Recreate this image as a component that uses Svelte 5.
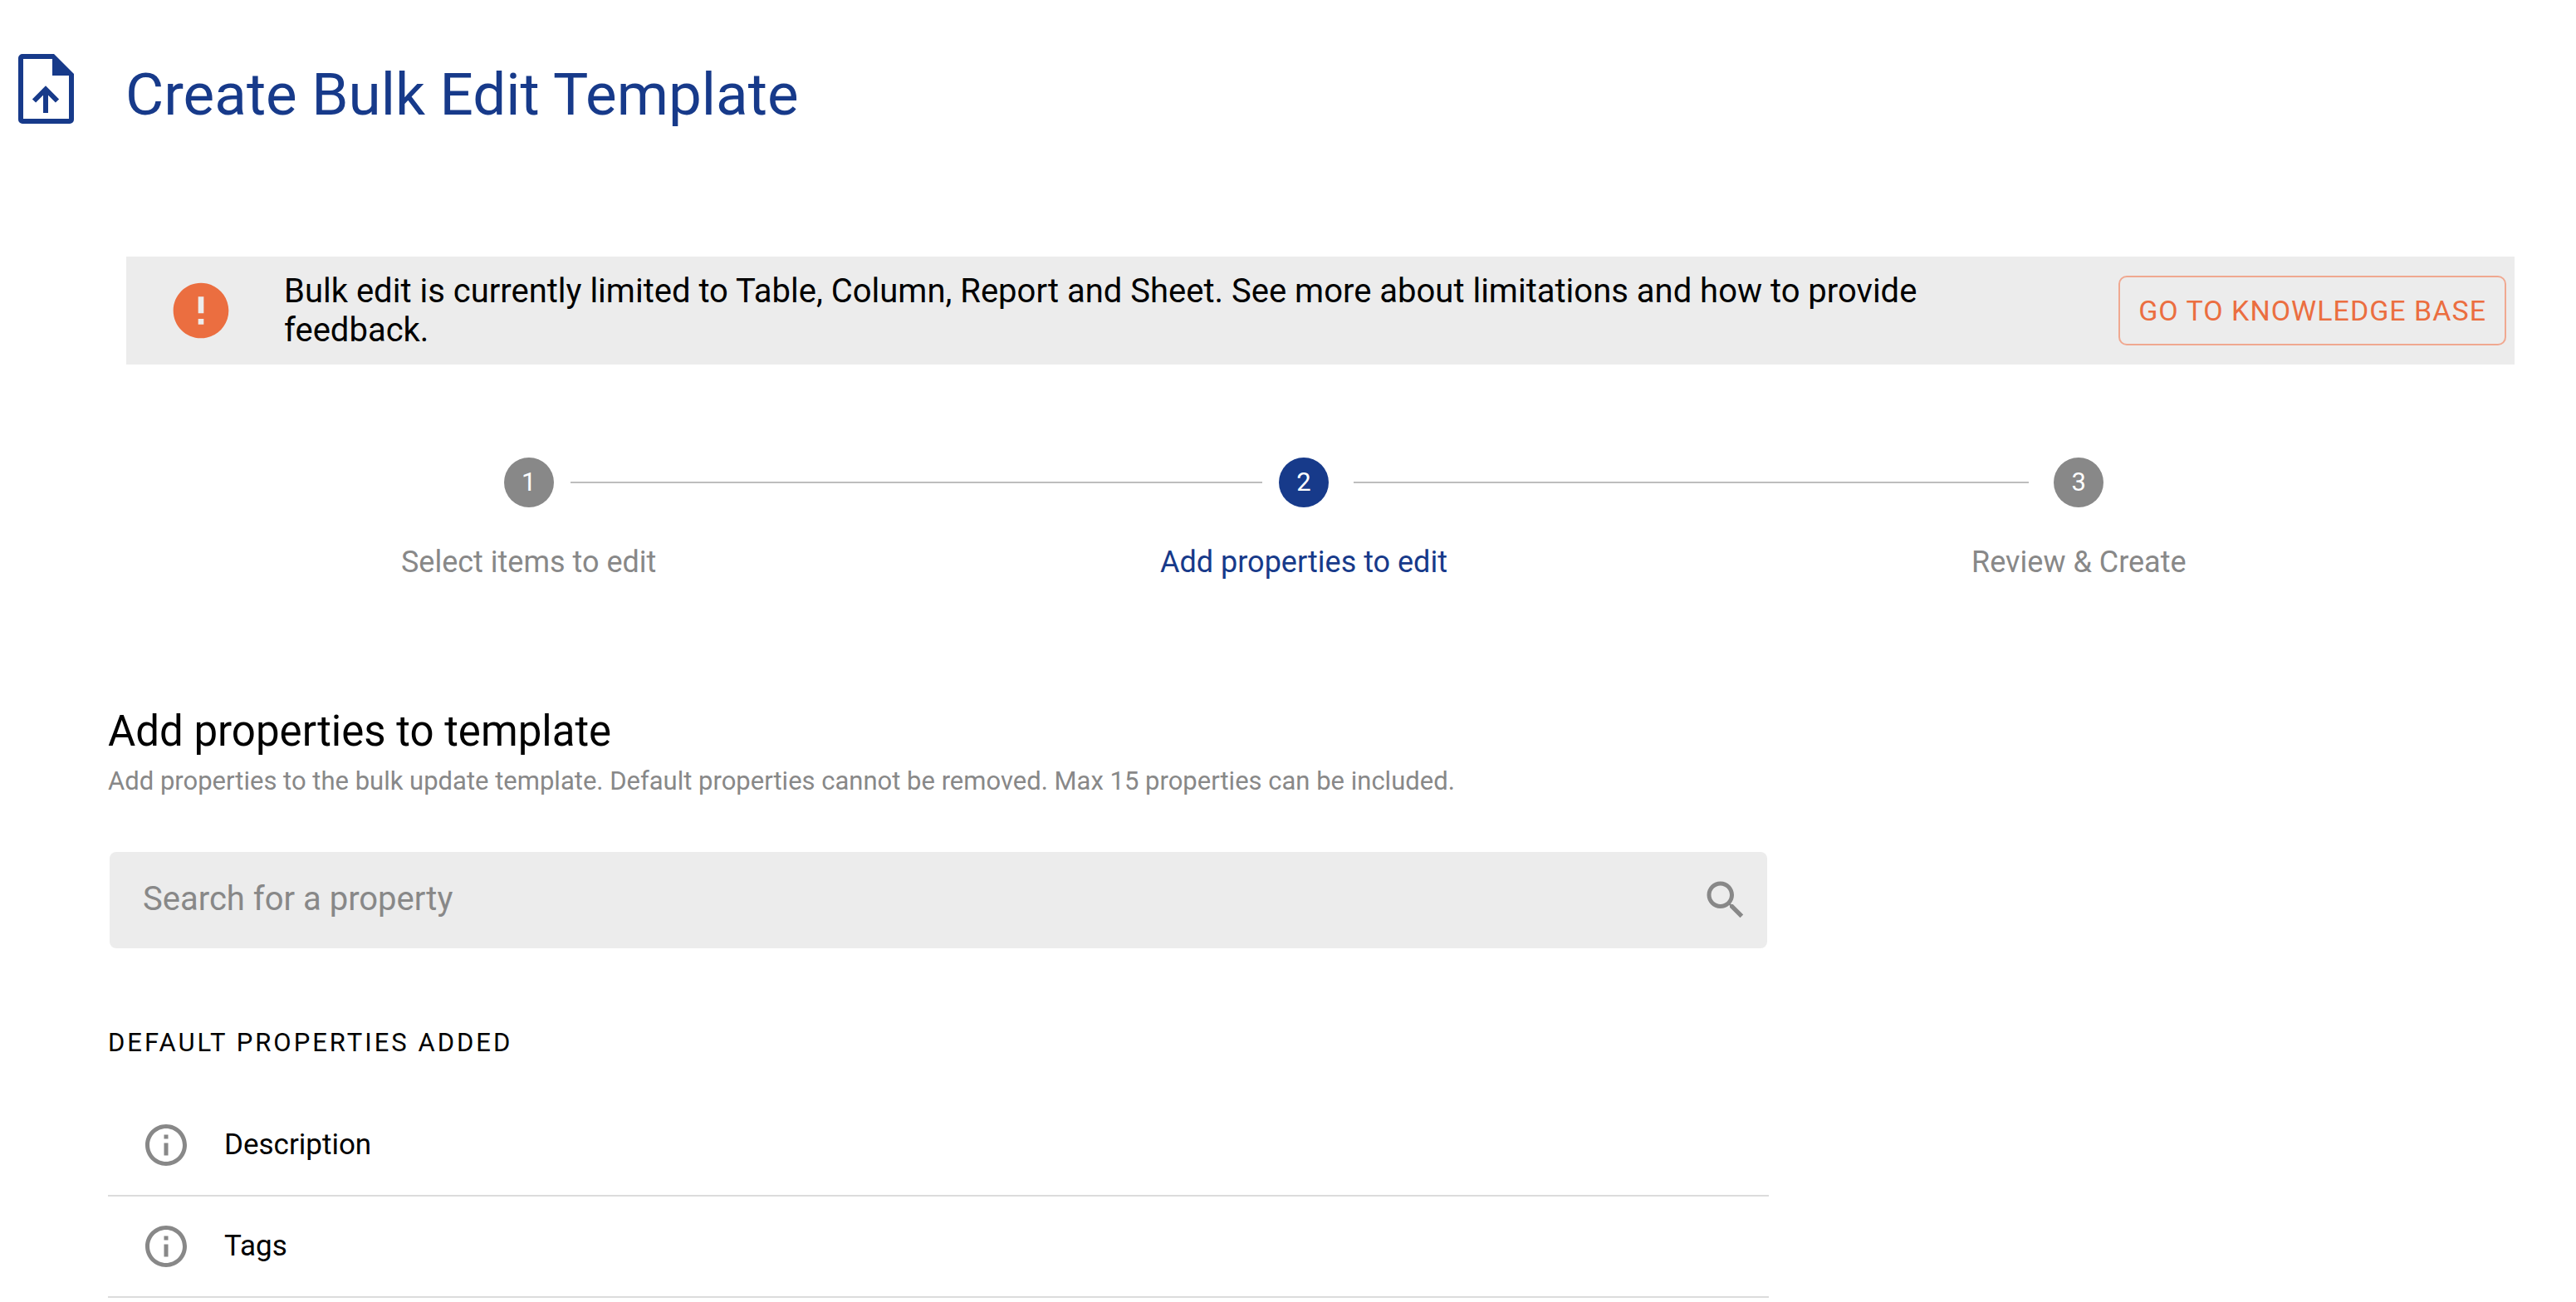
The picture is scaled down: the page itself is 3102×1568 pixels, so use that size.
<script>
  let query = $state('');
  const steps = ['Select items to edit', 'Add properties to edit', 'Review & Create'];
  const current = 1;
  const defaults = ['Description', 'Tags'];
</script>

<main>
  <header class="page-head">
    <svg class="file-icon" viewBox="0 0 100 100" aria-hidden="true">
      <path fill="currentColor" fill-rule="evenodd" d="M22 8h38l24 24v55a5 5 0 0 1-5 5H22a5 5 0 0 1-5-5V13a5 5 0 0 1 5-5zM23 14v72h55V34H58V14z" />
      <path fill="none" stroke="currentColor" stroke-width="6" d="M50 79V52M36 64.500l14-14 14 14" />
    </svg>
    <h1>Create Bulk Edit Template</h1>
  </header>

  <section class="banner">
    <svg class="alert-icon" viewBox="0 0 24 24" aria-hidden="true">
      <path fill="currentColor" d="M12 2C6.48 2 2 6.48 2 12s4.48 10 10 10 10-4.48 10-10S17.52 2 12 2zm1 15h-2v-2h2v2zm0-4h-2V7h2v6z" />
    </svg>
    <p>Bulk edit is currently limited to Table, Column, Report and Sheet. See more about limitations and how to provide feedback.</p>
    <button type="button">GO TO KNOWLEDGE BASE</button>
  </section>

  <ol class="steps">
    {#each steps as label, i}
      <li class:active={i === current} aria-current={i === current ? 'step' : undefined}>
        <div class="track">
          <span class="line"></span>
          <span class="dot">{i + 1}</span>
          <span class="line"></span>
        </div>
        <span class="label">{label}</span>
      </li>
    {/each}
  </ol>

  <section class="props">
    <h2>Add properties to template</h2>
    <p class="hint">Add properties to the bulk update template. Default properties cannot be removed. Max 15 properties can be included.</p>

    <label class="search">
      <input type="text" placeholder="Search for a property" aria-label="Search for a property" bind:value={query} />
      <svg viewBox="0 0 24 24" aria-hidden="true">
        <path fill="currentColor" d="M15.5 14h-.79l-.28-.27C15.41 12.59 16 11.11 16 9.5 16 5.91 13.09 3 9.5 3S3 5.910 3 9.5 5.910 16 9.5 16c1.61 0 3.09-.59 4.23-1.57l.27.28v.79l5 4.99L20.49 19l-4.99-5zm-6 0C7.01 14 5 11.99 5 9.5S7.010 5 9.5 5 14 7.010 14 9.5 11.99 14 9.5 14z" />
      </svg>
    </label>

    <h3>DEFAULT PROPERTIES ADDED</h3>
    <ul>
      {#each defaults as name}
        <li>
          <svg viewBox="0 0 24 24" aria-hidden="true">
            <path fill="currentColor" d="M11 7h2v2h-2zm0 4h2v6h-2zm1-9C6.48 2 2 6.48 2 12s4.48 10 10 10 10-4.48 10-10S17.52 2 12 2zm0 18c-4.41 0-8-3.59-8-8s3.59-8 8-8 8 3.59 8 8-3.59 8-8 8z" />
          </svg>
          <span>{name}</span>
        </li>
      {/each}
    </ul>
  </section>
</main>

<style>
  :global(body) {
    background: #fff;
  }
  main {
    font-family: Roboto, "Liberation Sans", sans-serif;
    color: #000;
    padding-top: 57px;
  }
  h1, h2, h3, p, ul, ol {
    margin: 0;
    padding: 0;
    font-weight: 400;
  }
  ul, ol {
    list-style: none;
  }
  svg {
    display: block;
    flex: none;
  }
  .page-head {
    display: flex;
    align-items: center;
    gap: 46px;
    padding-left: 5px;
    color: #173a8a;
  }
  .file-icon {
    width: 100px;
    height: 100px;
  }
  h1 {
    font-size: 71px;
    line-height: 84px;
    padding-top: 14px;
  }
  .banner {
    display: flex;
    align-items: center;
    min-height: 130px;
    margin: 152px 74px 0 152px;
    padding: 0 10px 0 50px;
    box-sizing: border-box;
    background: #ececec;
  }
  .alert-icon {
    width: 80px;
    height: 80px;
    color: #eb6e40;
  }
  .banner p {
    flex: 1;
    margin: 0 120px 0 60px;
    font-size: 40px;
    line-height: 47px;
  }
  button {
    flex: none;
    height: 84px;
    padding: 0 22px;
    border: 2px solid #f0a890;
    border-radius: 10px;
    background: none;
    color: #eb6e40;
    font: inherit;
    font-size: 34px;
    letter-spacing: 1px;
  }
  .steps {
    display: grid;
    grid-template-columns: repeat(3, 1fr);
    margin: 112px 132px 0 170px;
  }
  .steps li {
    color: #888;
    text-align: center;
  }
  .steps li.active {
    color: #173a8a;
  }
  .track {
    display: grid;
    grid-template-columns: 1fr 60px 1fr;
    align-items: center;
    gap: 20px;
    margin-bottom: 45px;
  }
  .line {
    height: 2px;
    background: #bdbdbd;
  }
  .steps li:first-child .line:first-child,
  .steps li:last-child .line:last-child {
    visibility: hidden;
  }
  .steps li.active .line:last-child {
    margin-left: 10px;
  }
  .steps li:last-child .line:first-child {
    margin-right: 10px;
  }
  .dot {
    height: 60px;
    border-radius: 50%;
    background: #888;
    color: #fff;
    font-size: 31px;
    line-height: 60px;
  }
  .active .dot {
    background: #173a8a;
  }
  .label {
    display: block;
    font-size: 36px;
    line-height: 42px;
  }
  .props {
    max-width: 2000px;
    margin: 153px 130px 0;
  }
  h2 {
    font-size: 51px;
    line-height: 60px;
  }
  .hint {
    margin-top: 12px;
    font-size: 31px;
    line-height: 36px;
    color: #888;
  }
  .search {
    display: flex;
    align-items: center;
    height: 116px;
    margin: 67px 2px 0;
    padding: 0 20px 0 40px;
    box-sizing: border-box;
    border-radius: 8px;
    background: #ececec;
    color: #888;
  }
  .search svg {
    width: 60px;
    height: 60px;
  }
  input {
    flex: 1;
    min-width: 0;
    height: 60px;
    padding: 0 0 4px;
    box-sizing: border-box;
    border: 0;
    outline: 0;
    background: none;
    font: inherit;
    font-size: 40px;
    color: #000;
  }
  input::placeholder {
    color: #888;
    opacity: 1;
  }
  h3 {
    margin-top: 96px;
    font-size: 31px;
    line-height: 36px;
    letter-spacing: 3px;
  }
  ul {
    margin-top: 45px;
  }
  ul li {
    display: flex;
    align-items: center;
    gap: 40px;
    height: 120px;
    padding-left: 40px;
    border-bottom: 2px solid #dcdcdc;
    font-size: 35px;
    line-height: 42px;
  }
  ul svg {
    width: 60px;
    height: 60px;
    color: #888;
  }
</style>
